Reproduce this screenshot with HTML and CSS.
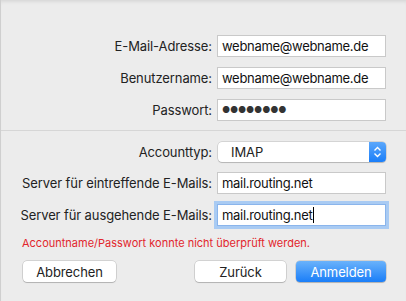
FILE: index.html
```html
<!DOCTYPE html>
<html lang="de">
<head>
  <meta charset="UTF-8" />
  <title>Account hinzufügen</title>
  <link rel="stylesheet" href="styles.css">
</head>
<body>
  <div class="sheet">
    <div class="form">
      <label class="label">E-Mail-Adresse:</label>
      <div class="field">webname@webname.de</div>
      <label class="label">Benutzername:</label>
      <div class="field">webname@webname.de</div>
      <label class="label">Passwort:</label>
      <div class="field dots">&#9679;&#9679;&#9679;&#9679;&#9679;&#9679;&#9679;&#9679;</div>
    </div>

    <div class="divider"></div>

    <div class="form server">
      <label class="label">Accounttyp:</label>
      <div class="select">
        <span>IMAP</span>
        <span class="stepper">
          <svg width="9" height="12" viewBox="0 0 9 12">
            <path d="M1.5 4.5 L4.5 1.5 L7.5 4.5 M1.5 7.5 L4.5 10.5 L7.5 7.5" fill="none" stroke="#fff" stroke-width="1.4"/>
          </svg>
        </span>
      </div>
      <label class="label">Server für eintreffende E-Mails:</label>
      <div class="field">mail.routing.net</div>
      <label class="label">Server für ausgehende E-Mails:</label>
      <div class="field focus">mail.routing.net<span class="caret"></span></div>
    </div>

    <div class="error">Accountname/Passwort konnte nicht überprüft werden.</div>

    <div class="buttons">
      <button class="btn">Abbrechen</button>
      <div class="right">
        <button class="btn back">Zurück</button>
        <button class="btn primary">Anmelden</button>
      </div>
    </div>
  </div>
</body>
</html>
```

FILE: styles.css
```css
body {
  margin: 0;
  background: #ececec;
  font-family: Inter, "Liberation Sans", sans-serif;
  font-size: 13px;
  letter-spacing: -0.1px;
  color: #222;
}

.sheet {
  height: 301px;
  box-sizing: border-box;
  border-left: 1px solid #cfcfcf;
  box-shadow: inset 0 4px 4px -3px rgba(0, 0, 0, 0.12);
  padding-top: 35px;
}

.form {
  display: grid;
  grid-template-columns: 1fr 169px;
  column-gap: 5px;
  row-gap: 10px;
  padding-right: 20px;
  align-items: center;
}

.label {
  text-align: right;
  white-space: nowrap;
}

.field {
  height: 22px;
  box-sizing: border-box;
  background: #fff;
  border: 1px solid #c9c9c9;
  padding: 0 4px;
  line-height: 20px;
  font-size: 13px;
  letter-spacing: -0.3px;
  color: #111;
}

.dots {
  font-size: 9px;
  letter-spacing: -0.2px;
  color: #333;
}

.focus {
  box-shadow: 0 0 0 3px #a9cbf3;
  border-color: #8ab5ec;
}

.caret {
  display: inline-block;
  width: 1px;
  height: 16px;
  margin-left: 1px;
  background: #000;
  vertical-align: -3px;
}

.divider {
  height: 1px;
  background: #d6d6d6;
  margin: 9px 0 11px;
}

.select {
  height: 20px;
  box-sizing: border-box;
  display: flex;
  justify-content: space-between;
  align-items: center;
  background: #fff;
  border-radius: 4px;
  box-shadow: 0 0 0 0.5px rgba(0, 0, 0, 0.2), 0 1px 1px rgba(0, 0, 0, 0.15);
  padding-left: 13px;
  color: #222;
  margin-left: 1px;
}

.stepper {
  width: 17px;
  height: 20px;
  display: flex;
  align-items: center;
  justify-content: center;
  background: linear-gradient(#5ba7fb, #1a7ef9);
  border-radius: 0 4px 4px 0;
}

.error {
  color: #e2262c;
  font-size: 11px;
  letter-spacing: 0;
  padding-left: 21px;
  margin-top: 10px;
  line-height: 14px;
}

.buttons {
  display: flex;
  justify-content: space-between;
  padding: 0 20px 0 22px;
  margin-top: 11px;
}

.right {
  display: flex;
  gap: 10px;
}

.btn {
  height: 21px;
  box-sizing: border-box;
  font-family: inherit;
  font-size: 13px;
  letter-spacing: -0.1px;
  color: #222;
  background: #fff;
  border: none;
  border-radius: 4px;
  box-shadow: 0 0 0 0.5px rgba(0, 0, 0, 0.22), 0 1px 1px rgba(0, 0, 0, 0.15);
  width: 93px;
  padding: 0;
}

.back {
  width: 91px;
}

.primary {
  width: 90px;
  color: #fff;
  background: linear-gradient(#6ab2fb, #1a7ef8);
}
```
